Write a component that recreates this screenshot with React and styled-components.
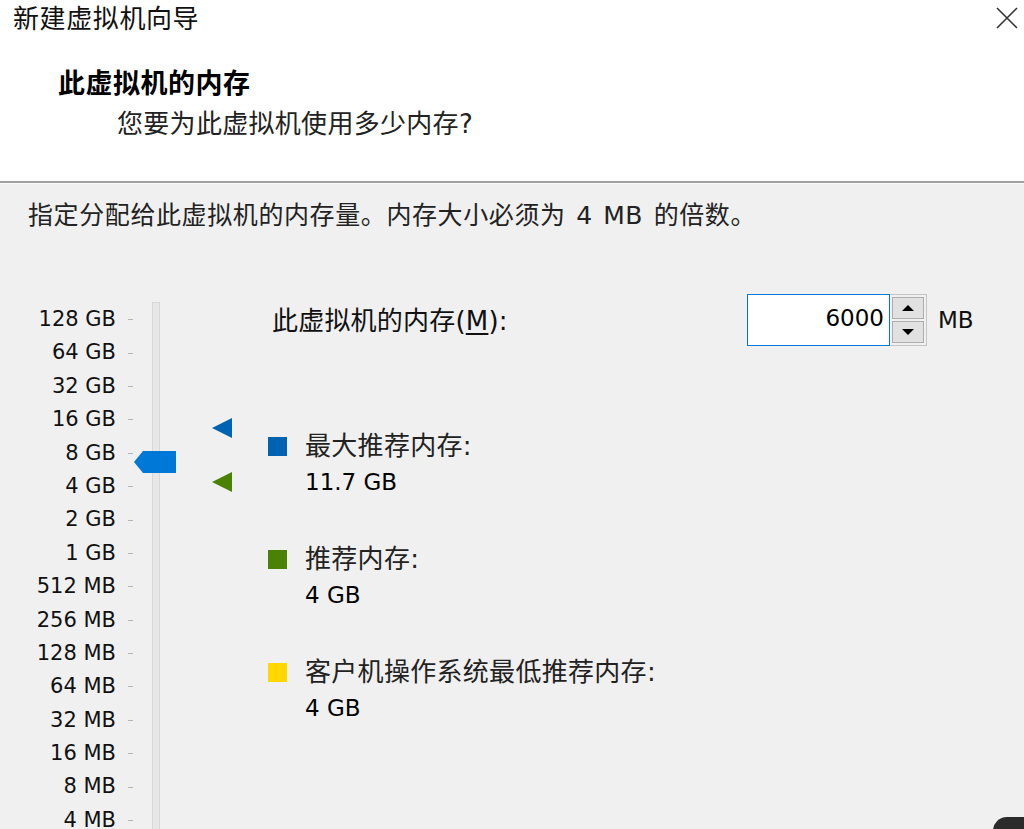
import styled, { createGlobalStyle } from "styled-components"

const GlobalStyle = createGlobalStyle`
    html, body {
        margin: 0;
        padding: 0;
        background: #f0f0f0;
        overflow: hidden;
    }
    * {
        box-sizing: border-box;
    }
`

const FONT = `"DejaVu Sans", "Noto Sans CJK SC", sans-serif`

const Window = styled.div`
    position: relative;
    width: 1024px;
    height: 829px;
    overflow: hidden;
    font-family: ${FONT};
    color: #000;
    background: #f0f0f0;
`

const Header = styled.div`
    height: 183px;
    background: #fff;
    border-bottom: 2px solid #a3a3a3;
    box-shadow: 0 1px 0 #fafafa;
`

const TitleBar = styled.div`
    display: flex;
    justify-content: space-between;
    align-items: center;
    height: 38px;
    padding: 0 5px 0 13px;
`

const Title = styled.div`
    font-size: 26px;
    letter-spacing: 0.6px;
    line-height: 38px;
    color: #111;
`

const Close = styled.div`
    display: flex;
    margin-top: -2px;
`

const Heading = styled.div`
    margin: 26px 0 0 58px;
    font-size: 27px;
    letter-spacing: 0.5px;
    font-weight: 700;
    line-height: 40px;
`

const SubHeading = styled.div`
    margin-left: 117px;
    font-size: 26px;
    letter-spacing: 0.3px;
    line-height: 40px;
    color: #222;
`

const Description = styled.div`
    padding: 16px 28px 0;
    height: 51px;
    font-size: 25px;
    letter-spacing: 0.6px;
    word-spacing: 2px;
    line-height: 34px;
    color: #222;
`

const Main = styled.div`
    display: flex;
`

const Scale = styled.div`
    display: flex;
    padding-top: 69px;
`

const Ticks = styled.div`
    display: flex;
    flex-direction: column;
    width: 134px;
`

const TickRow = styled.div`
    display: flex;
    align-items: center;
    height: 33.4px;
`

const TickLabel = styled.span`
    width: 116px;
    text-align: right;
    font-size: 21px;
    line-height: 33.4px;
    color: #111;
`

const Tick = styled.span`
    width: 5px;
    height: 1px;
    margin-left: 12px;
    background: #b4b4b4;
`

const TrackArea = styled.div`
    position: relative;
    width: 106px;
`

const Track = styled.div`
    width: 8px;
    height: 560px;
    margin: -1px 0 0 18px;
    background: #e7e7e7;
    border: 1px solid #d7d7d7;
`

const Thumb = styled.div`
    position: absolute;
    left: 0;
    top: ${p => p.$top}px;
    width: 42px;
    height: 22px;
    background: #0078d7;
    clip-path: polygon(0 50%, 9px 0, 100% 0, 100% 100%, 9px 100%);
`

const Marker = styled.div`
    position: absolute;
    left: 78px;
    top: ${p => p.$top}px;
    width: 20px;
    height: 20px;
    background: ${p => p.$color};
    clip-path: polygon(100% 0, 0 50%, 100% 100%);
`

const Pane = styled.div`
    flex: 1;
    padding: 60px 0 0 28px;
`

const InputRow = styled.div`
    display: flex;
    align-items: center;
    height: 52px;
    padding-left: 4px;
`

const InputLabel = styled.div`
    width: 475px;
    margin-top: -3px;
    font-size: 26px;
    letter-spacing: 0.2px;
    color: #111;

    u {
        text-decoration: underline;
        text-underline-offset: 3px;
    }
`

const NumberBox = styled.div`
    display: flex;
    align-items: center;
    justify-content: flex-end;
    width: 143px;
    height: 52px;
    padding: 0 5px 4px 0;
    background: #fff;
    border: 1px solid #0078d7;
    font-size: 23px;
`

const Spinner = styled.div`
    display: flex;
    flex-direction: column;
    gap: 2px;
    width: 37px;
    height: 52px;
    padding: 2px;
    background: #f0f0f0;
    border: 1px solid #c4c4c4;
    border-left: none;
`

const SpinButton = styled.div`
    display: flex;
    align-items: center;
    justify-content: center;
    flex: 1;
    background: #e1e1e1;
    border: 1px solid #adadad;
`

const Arrow = styled.span`
    width: 0;
    height: 0;
    border-left: 6px solid transparent;
    border-right: 6px solid transparent;
    ${p => p.$down ? "border-top: 6px solid #000;" : "border-bottom: 6px solid #000;"}
`

const Unit = styled.div`
    margin-left: 11px;
    font-size: 23px;
    color: #111;
`

const Legend = styled.div`
    display: flex;
    flex-direction: column;
    gap: 41px;
    margin-top: 82px;
`

const LegendItem = styled.div`
    display: grid;
    grid-template-columns: 19px 1fr;
    column-gap: 18px;
    align-items: center;
`

const Swatch = styled.span`
    width: 19px;
    height: 19px;
    background: ${p => p.$color};
`

const LegendText = styled.div`
    font-size: 26px;
    letter-spacing: 0.3px;
    line-height: 36px;
    color: #222;
`

const LegendValue = styled.div`
    grid-column: 2;
    font-size: 23px;
    line-height: 36px;
    color: #000;
`

const Corner = styled.div`
    position: absolute;
    left: 993px;
    top: 817px;
    width: 40px;
    height: 20px;
    background: #2b2b2b;
    border-radius: 14px 0 0 0;
`

const labels = [
    "128 GB", "64 GB", "32 GB", "16 GB", "8 GB", "4 GB", "2 GB", "1 GB",
    "512 MB", "256 MB", "128 MB", "64 MB", "32 MB", "16 MB", "8 MB", "4 MB",
]

const legend = [
    { color: "#0063b1", text: "最大推荐内存:", value: "11.7 GB" },
    { color: "#498205", text: "推荐内存:", value: "4 GB" },
    { color: "#ffd800", text: "客户机操作系统最低推荐内存:", value: "4 GB" },
]

export default function App() {
    return (
        <Window>
            <GlobalStyle />
            <Header>
                <TitleBar>
                    <Title>新建虚拟机向导</Title>
                    <Close>
                        <svg width="24" height="24" viewBox="0 0 24 24">
                            <path d="M2 2 L22 22 M22 2 L2 22" stroke="#333" strokeWidth="1.6" fill="none" />
                        </svg>
                    </Close>
                </TitleBar>
                <Heading>此虚拟机的内存</Heading>
                <SubHeading>您要为此虚拟机使用多少内存?</SubHeading>
            </Header>
            <Description>指定分配给此虚拟机的内存量。内存大小必须为 4 MB 的倍数。</Description>
            <Main>
                <Scale>
                    <Ticks>
                        {labels.map(l => (
                            <TickRow key={l}>
                                <TickLabel>{l}</TickLabel>
                                <Tick />
                            </TickRow>
                        ))}
                    </Ticks>
                    <TrackArea>
                        <Track />
                        <Thumb $top={148} />
                        <Marker $top={115} $color="#0063b1" />
                        <Marker $top={169} $color="#498205" />
                    </TrackArea>
                </Scale>
                <Pane>
                    <InputRow>
                        <InputLabel>此虚拟机的内存(<u>M</u>):</InputLabel>
                        <NumberBox>6000</NumberBox>
                        <Spinner>
                            <SpinButton><Arrow /></SpinButton>
                            <SpinButton><Arrow $down /></SpinButton>
                        </Spinner>
                        <Unit>MB</Unit>
                    </InputRow>
                    <Legend>
                        {legend.map(item => (
                            <LegendItem key={item.text}>
                                <Swatch $color={item.color} />
                                <LegendText>{item.text}</LegendText>
                                <LegendValue>{item.value}</LegendValue>
                            </LegendItem>
                        ))}
                    </Legend>
                </Pane>
            </Main>
            <Corner />
        </Window>
    )
}
